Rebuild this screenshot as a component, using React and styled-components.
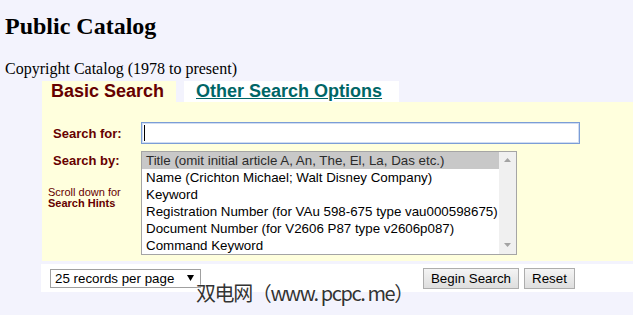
import React from "react";
import styled, { createGlobalStyle } from "styled-components";

const Global = createGlobalStyle`
  html, body { margin: 0; padding: 0; background: #f3f3fd; }
  #root { width: 633px; }
`;

const Page = styled.div`
  position: relative;
  width: 633px;
  height: 315px;
  overflow: hidden;
  background: #f3f3fd;
  font-family: "Liberation Serif", "Times New Roman", serif;
  color: #000;
`;

const Title = styled.h2`
  margin: 13px 0 0 5px;
  font-size: 24px;
  line-height: 27px;
  font-weight: bold;
`;

const Subtitle = styled.div`
  margin: 20px 0 0 5px;
  font-size: 16px;
  line-height: 18px;
`;

const TabRow = styled.div`
  display: flex;
  gap: 8px;
  margin: 3px 0 0 42px;
  height: 21px;
`;

const Tab = styled.div`
  width: ${(p) => p.$w}px;
  height: 21px;
  box-sizing: border-box;
  padding-left: ${(p) => p.$pad}px;
  background: ${(p) => (p.$active ? "#ffffdd" : "#ffffff")};
  font-family: "Liberation Sans", Arial, sans-serif;
  font-weight: bold;
  font-size: 18px;
  line-height: 21px;
  color: ${(p) => (p.$active ? "#660000" : "#006666")};
  text-decoration: ${(p) => (p.$active ? "none" : "underline")};
  white-space: nowrap;
`;

const Panel = styled.div`
  margin-left: 42px;
  background: #ffffdd;
  display: grid;
  grid-template-columns: 99px 1fr;
  row-gap: 7px;
  padding: 20px 0 6px 0;
  font-family: "Liberation Sans", Arial, sans-serif;
`;

const Label = styled.div`
  padding-left: 11px;
  padding-top: ${(p) => p.$top ?? 0}px;
  align-self: ${(p) => (p.$center ? "center" : "start")};
  font-size: 13px;
  font-weight: bold;
  color: #660000;
`;

const Hint = styled.div`
  margin: 19px 0 0 -5px;
  font-size: 11px;
  line-height: 11px;
  color: #660000;
  font-weight: ${(p) => (p.$bold ? "bold" : "normal")};
  & + & { margin-top: 0; }
`;

const TextBox = styled.div`
  width: 439px;
  height: 22px;
  box-sizing: border-box;
  border: 1px solid #7b9dd6;
  box-shadow: 0 0 0 1px #d0ddf2 inset;
  background: #fff;
  display: flex;
  align-items: center;
  padding-left: 2px;
`;

const Caret = styled.span`
  width: 1px;
  height: 16px;
  background: #000;
`;

const ListBox = styled.div`
  width: 376px;
  height: 104px;
  box-sizing: border-box;
  border: 1px solid #a5a5a5;
  background: #fff;
  display: flex;
`;

const Options = styled.div`
  flex: 1;
  display: flex;
  flex-direction: column;
`;

const Option = styled.div`
  height: 17px;
  line-height: 17px;
  padding-left: 4px;
  font-size: 13.33px;
  color: ${(p) => (p.$selected ? "#2b2b2b" : "#000")};
  background: ${(p) => (p.$selected ? "#c8c8c8" : "transparent")};
  white-space: nowrap;
`;

const ScrollTrack = styled.div`
  width: 17px;
  background: #f0f0f0;
  display: flex;
  flex-direction: column;
  justify-content: space-between;
  align-items: center;
  padding: 6px 0 7px;
`;

const BottomBar = styled.div`
  margin: 3px 0 0 41px;
  height: 28px;
  background: #fff;
  display: flex;
  align-items: center;
  justify-content: space-between;
  padding: 0 58px 0 9px;
  font-family: "Liberation Sans", Arial, sans-serif;
`;

const SelectBox = styled.div`
  width: 151px;
  height: 19px;
  box-sizing: border-box;
  border: 1px solid #a0a0a0;
  background: #fff;
  display: flex;
  align-items: center;
  justify-content: space-between;
  padding: 0 6px 0 4px;
  font-size: 13.33px;
`;

const Buttons = styled.div`
  display: flex;
  gap: 5px;
`;

const Button = styled.button`
  height: 21px;
  box-sizing: border-box;
  border: 1px solid #adadad;
  border-radius: 0;
  background: linear-gradient(#f4f4f4, #e9e9e9 50%, #dedede);
  font-family: "Liberation Sans", Arial, sans-serif;
  font-size: 13.33px;
  padding: 0;
  white-space: nowrap;
  color: #000;
  width: ${(p) => p.$w}px;
`;

const Watermark = styled.div`
  position: absolute;
  left: 196px;
  top: 281px;
  font-family: "Noto Sans CJK SC", sans-serif;
  font-size: 20px;
  line-height: 24px;
  color: #333;
  letter-spacing: -1.4px;
  text-shadow: 0 0 2px #fff, 0 0 1px #fff;
  white-space: nowrap;
`;

const Arrow = ({ up, color = "#a3a3a3", w = 7, h = 4 }) => (
  <svg width={w} height={h} viewBox={`0 0 ${w} ${h}`}>
    <polygon
      points={up ? `0,${h} ${w},${h} ${w / 2},0` : `0,0 ${w},0 ${w / 2},${h}`}
      fill={color}
    />
  </svg>
);

const options = [
  "Title (omit initial article A, An, The, El, La, Das etc.)",
  "Name (Crichton Michael; Walt Disney Company)",
  "Keyword",
  "Registration Number (for VAu 598-675 type vau000598675)",
  "Document Number (for V2606 P87 type v2606p087)",
  "Command Keyword",
];

export default function App() {
  return (
    <Page>
      <Global />
      <Title>Public Catalog</Title>
      <Subtitle>Copyright Catalog (1978 to present)</Subtitle>
      <TabRow>
        <Tab $active $w={134} $pad={9}>Basic Search</Tab>
        <Tab $w={215} $pad={12}>Other Search Options</Tab>
      </TabRow>
      <Panel>
        <Label $center>Search for:</Label>
        <TextBox>
          <Caret />
        </TextBox>
        <Label $top={2}>
          Search by:
          <Hint>Scroll down for</Hint>
          <Hint $bold>Search Hints</Hint>
        </Label>
        <ListBox>
          <Options>
            {options.map((o, i) => (
              <Option key={o} $selected={i === 0}>
                {o}
              </Option>
            ))}
          </Options>
          <ScrollTrack>
            <Arrow up />
            <Arrow />
          </ScrollTrack>
        </ListBox>
      </Panel>
      <BottomBar>
        <SelectBox>
          <span>25 records per page</span>
          <Arrow color="#000" w={7} h={6} />
        </SelectBox>
        <Buttons>
          <Button $w={96}>Begin Search</Button>
          <Button $w={51}>Reset</Button>
        </Buttons>
      </BottomBar>
      <Watermark>双电网（www. pcpc. me）</Watermark>
    </Page>
  );
}
